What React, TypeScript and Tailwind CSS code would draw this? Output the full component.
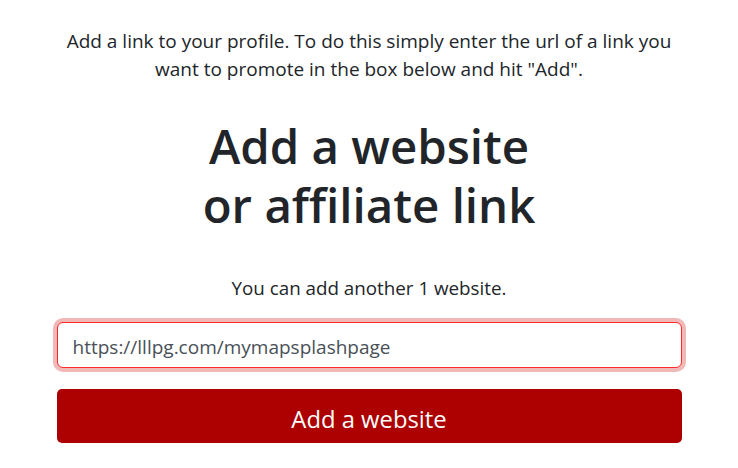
import React from "react";

export default function App() {
  return (
    <div className="min-h-[468px] w-full bg-white text-[#212529]" style={{ fontFamily: '"Open Sans", "Noto Sans", sans-serif' }}>
      <div className="mx-auto flex w-[625px] flex-col items-center pt-[27px]">
        <p className="text-center text-[19px] leading-[28px]">
          Add a link to your profile. To do this simply enter the url of a link you want to promote in the box below and hit "Add".
        </p>
        <h1 className="mt-[33px] text-center text-[47.4px] font-semibold leading-[59px]">
          Add a website
          <br />
          or affiliate link
        </h1>
        <p className="mt-[40px] text-center text-[18.8px] leading-[28px]">You can add another 1 website.</p>
        <div className="mt-[20px] w-full">
          <input
            type="text"
            defaultValue="https://lllpg.com/mymapsplashpage"
            className="h-[46px] w-full rounded-[6px] border border-[#ff2a2a] bg-white px-[15px] pt-[4px] text-[19px] text-[#495057] shadow-[0_0_0_4px_rgba(204,0,0,0.28)] outline-none"
          />
        </div>
        <button className="mt-[21px] h-[54px] w-full rounded-[5px] bg-[#ad0000] pt-[6px] text-[23.8px] leading-[32px] text-white">
          Add a website
        </button>
      </div>
    </div>
  );
}
